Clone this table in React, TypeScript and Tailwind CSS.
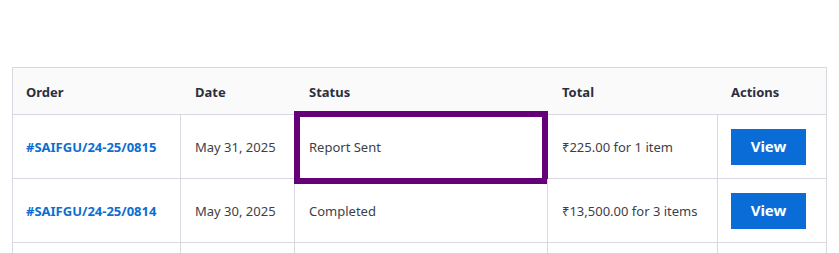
import React from 'react';

type Order = { id: string; date: string; status: string; total: string; highlight?: boolean };

const ORDERS: Order[] = [
  { id: '#SAIFGU/24-25/0815', date: 'May 31, 2025', status: 'Report Sent', total: '₹225.00 for 1 item', highlight: true },
  { id: '#SAIFGU/24-25/0814', date: 'May 30, 2025', status: 'Completed', total: '₹13,500.00 for 3 items' },
  { id: '', date: '', status: '', total: '' },
];

const COLS = ['w-[168px]', 'w-[114px]', 'w-[253px]', 'w-[170px]', 'w-[108px]'];

const App: React.FC = () => {
  return (
    <div className="h-[253px] overflow-hidden bg-white pt-[67px] pl-[12px] text-[13px] text-[#3c3f4a]" style={{ fontFamily: '"Noto Sans", "Open Sans", sans-serif' }}>
      <div className="w-[815px] border border-[#d8d8e0]">
        {/* header */}
        <div className="flex h-[47px] items-center pt-[3px] bg-[#fafafa] border-b border-[#d8d8e0] font-bold text-[#2c2f3b]">
          <div className={`${COLS[0]} pl-[13px]`}>Order</div>
          <div className={`${COLS[1]} pl-[14px]`}>Date</div>
          <div className={`${COLS[2]} pl-[14px]`}>Status</div>
          <div className={`${COLS[3]} pl-[14px]`}>Total</div>
          <div className={`${COLS[4]} pl-[13px]`}>Actions</div>
        </div>

        {ORDERS.map((o, i) => (
          <div key={i} className="flex h-[64px] border-b border-[#d8d8e0]">
            <div className={`${COLS[0]} flex items-center pt-[2px] pl-[13px] border-r border-[#d8d8e0] font-bold text-[#0d6ecf]`}>{o.id}</div>
            <div className={`${COLS[1]} flex items-center pt-[2px] pl-[14px] border-r border-[#d8d8e0]`}>{o.date}</div>
            <div className={`${COLS[2]} relative flex items-center pt-[2px] pl-[14px] border-r border-[#d8d8e0]`}>
              {o.status}
              {o.highlight && (
                <div className="absolute left-[-1px] top-[-4px] w-[254px] h-[73px] border-[6px] border-[#660078] pointer-events-none" />
              )}
            </div>
            <div className={`${COLS[3]} flex items-center pt-[2px] pl-[14px] border-r border-[#d8d8e0]`}>{o.total}</div>
            <div className={`${COLS[4]} flex items-center pl-[13px]`}>
              {o.id && (
                <button className="w-[75px] h-[36px] bg-[#0a6cd6] text-white font-bold text-[15px]">View</button>
              )}
            </div>
          </div>
        ))}
      </div>
    </div>
  );
};

export default App;
